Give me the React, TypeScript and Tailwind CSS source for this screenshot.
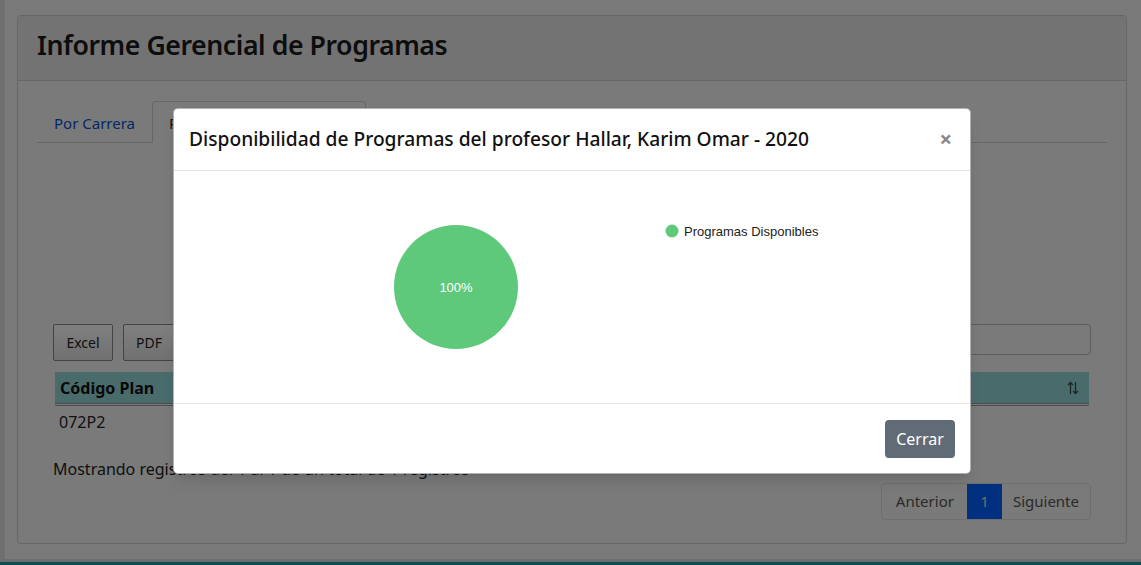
import { useState } from "react";

const font = "font-['Segoe_UI','Noto_Sans',sans-serif]";

function PieChart() {
  return (
    <svg width="798" height="232" viewBox="0 0 798 232" className="block">
      <circle cx="282" cy="116" r="62" fill="#5ec97b" />
      <text
        x="282"
        y="120.5"
        textAnchor="middle"
        fill="#ffffff"
        fontSize="13"
        fontFamily="Liberation Sans, Arial, sans-serif"
      >
        100%
      </text>
      <circle cx="498" cy="60" r="6.5" fill="#5ec97b" />
      <text x="510" y="64.5" fill="#222222" fontSize="13" fontFamily="Liberation Sans, Arial, sans-serif">
        Programas Disponibles
      </text>
    </svg>
  );
}

function SortIcon() {
  return (
    <svg width="12" height="14" viewBox="0 0 12 14" fill="none" stroke="#3a4a4b" strokeWidth="1.3">
      <path d="M3.5 13V1.5M1 4l2.5-2.5L6 4" />
      <path d="M8.5 1v11.5M6 10l2.5 2.5L11 10" />
    </svg>
  );
}

export default function App() {
  const [open, setOpen] = useState(true);

  return (
    <div className={`relative h-[565px] w-[1141px] overflow-hidden bg-[#dedede] ${font}`}>
      <div className="ml-[5px] h-[559px] bg-[#f4f4f4] px-[12px] pt-[15px]">
        <div className="h-[529px] w-[1110px] rounded-[4px] border border-[#cccccc] bg-[#f4f4f4]">
          <div className="flex h-[65px] items-center rounded-t-[4px] border-b border-[#cccccc] bg-[#e7e7e7] px-[19px] pb-[5px]">
            <h1 className="text-[26.7px] font-semibold leading-none tracking-[-0.45px] text-[#1a1a1a]">
              Informe Gerencial de Programas
            </h1>
          </div>

          <div className="px-[19px] pt-[21px]">
            <div className="flex h-[41px] items-end border-b border-[#cccccc]">
              <a className="flex h-[40px] items-center px-[17px] pt-[2px] text-[15px] text-[#0a4fd0]">Por Carrera</a>
              <a className="-mb-px flex h-[42px] w-[214px] items-center rounded-t-[4px] border border-b-0 border-[#cccccc] bg-[#f4f4f4] px-[16px] pt-[2px] text-[15px] text-[#333333]">
                Por Profesor
              </a>
            </div>

            <div className="px-[16px] pt-[181px]">
              <div className="flex items-start justify-between">
                <div className="flex gap-[10px]">
                  <button className="h-[37px] w-[60px] rounded-[2px] border border-[#888888] bg-gradient-to-b from-[#ffffff] to-[#e2e2e2] text-[14px] text-[#222222]">
                    Excel
                  </button>
                  <button className="h-[37px] w-[52px] rounded-[2px] border border-[#888888] bg-gradient-to-b from-[#ffffff] to-[#e2e2e2] text-[14px] text-[#222222]">
                    PDF
                  </button>
                </div>
                <div className="flex items-center gap-2 text-[16px] text-[#222222]">
                  <span>Buscar:</span>
                  <div className="h-[31px] w-[220px] rounded-[4px] border border-[#bbbbbb] bg-[#f4f4f4]" />
                </div>
              </div>

              <div className="mt-[11px] ml-[2px] w-[1034px]">
                <div className="flex h-[31px] items-center justify-between bg-[#95d6d8] pl-[5px] pr-[10px] text-[16px] font-bold text-[#111111]">
                  <span>Código Plan</span>
                  <SortIcon />
                </div>
                <div className="h-[3px] border-b border-t border-[#999999]" />
                <div className="flex h-[32px] items-center px-[4px] text-[16px] text-[#222222]">072P2</div>
              </div>

              <p className="mt-[23px] text-[16px] leading-[16px] text-[#222222]">
                Mostrando registros del 1 al 1 de un total de 1 registros
              </p>

              <div className="mt-[6px] flex justify-end">
                <div className="flex h-[37px] overflow-hidden rounded-[4px] border border-[#dddddd] text-[15px] text-[#555555]">
                  <span className="flex items-center pl-[14px] pr-[13px]">Anterior</span>
                  <span className="flex w-[35px] items-center justify-center bg-[#0061ff] text-[#dddddd]">1</span>
                  <span className="flex items-center pl-[11px] pr-[11px]">Siguiente</span>
                </div>
              </div>
            </div>
          </div>
        </div>
      </div>
      <div className="h-[3px] bg-[#dcdcdc]" />
      <div className="h-[3px] bg-[#1a9aa3]" />

      {open && (
        <>
          <div className="absolute inset-0 bg-black/50" />
          <div className="absolute left-[173px] top-[108px] flex h-[366px] w-[798px] flex-col rounded-[5px] border border-black/30 bg-white shadow-lg">
            <div className="flex h-[62px] shrink-0 items-center justify-between border-b border-[#e5e5e5] pl-[15px] pr-[18px]">
              <h4 className="text-[19.2px] font-medium text-[#111111]">
                Disponibilidad de Programas del profesor Hallar, Karim Omar - 2020
              </h4>
              <button onClick={() => setOpen(false)} className="-mt-[3px] text-[22px] font-bold leading-none text-[#888888]">
                ×
              </button>
            </div>
            <div className="h-[232px] shrink-0">
              <PieChart />
            </div>
            <div className="flex flex-1 items-center justify-end border-t border-[#e5e5e5] pr-[15px]">
              <button className="h-[38px] w-[70px] rounded-[4px] bg-[#616b76] text-[16px] text-white">Cerrar</button>
            </div>
          </div>
        </>
      )}
    </div>
  );
}
